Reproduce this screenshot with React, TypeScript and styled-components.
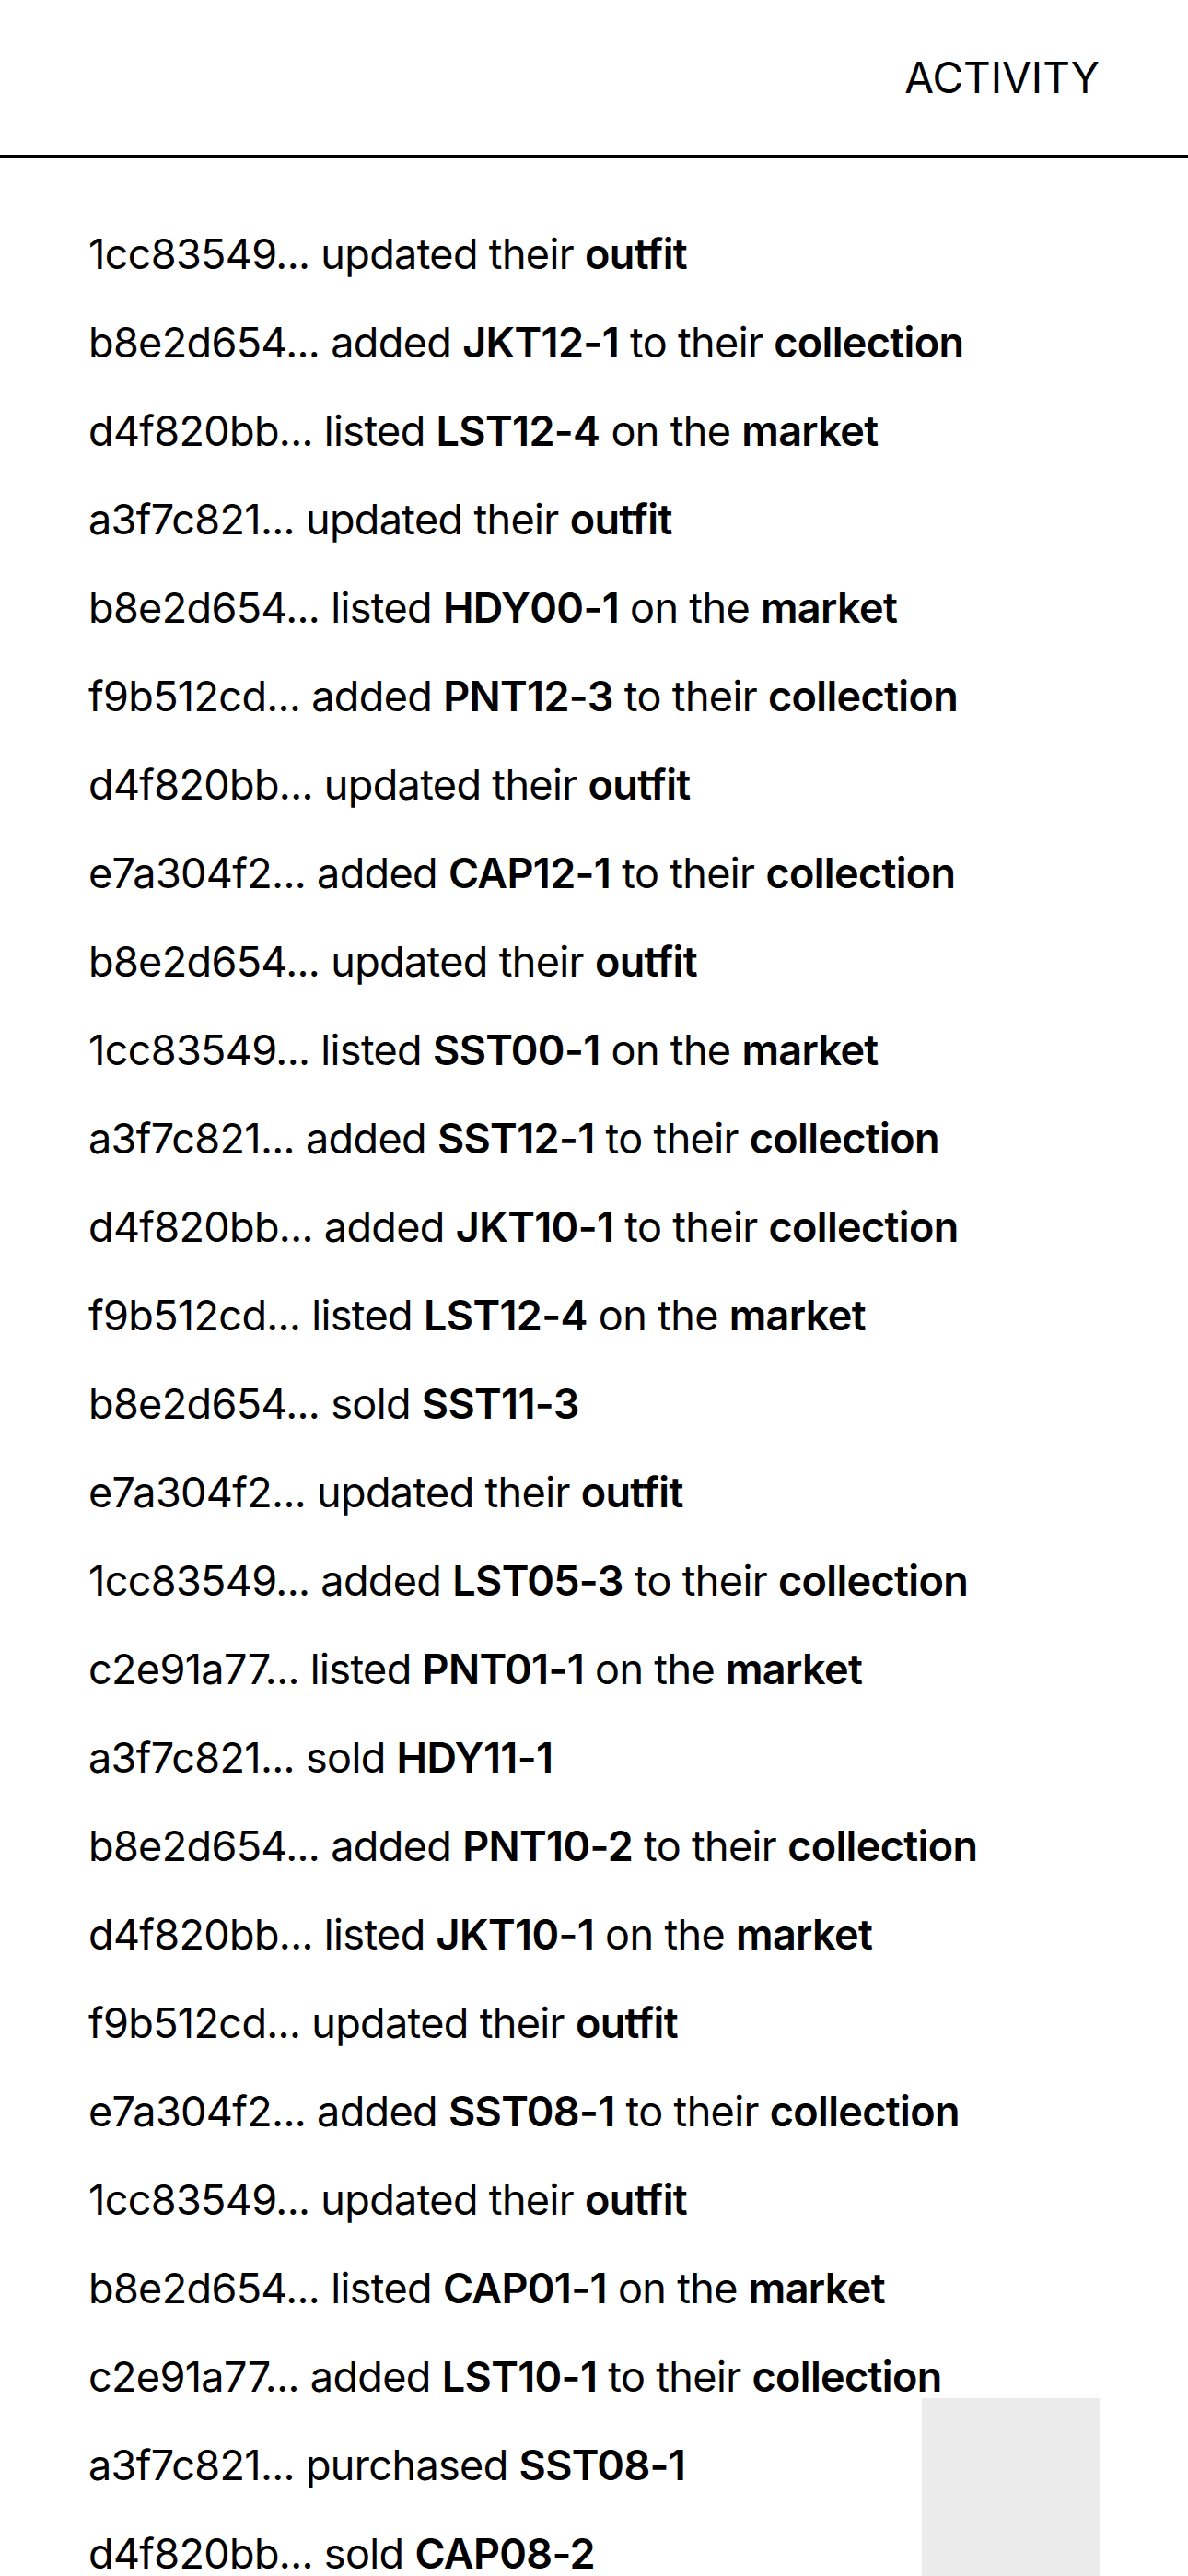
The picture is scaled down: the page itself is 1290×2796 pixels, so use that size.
import React from "react";
import styled, { createGlobalStyle } from "styled-components";

const GlobalStyle = createGlobalStyle`
  html, body {
    margin: 0;
    padding: 0;
    background: #ffffff;
    overflow: hidden;
  }
  body {
    font-family: Inter, "Noto Sans", sans-serif;
    color: #000;
  }
`;

const Page = styled.div`
  height: 100vh;
  overflow: hidden;
  display: flex;
  flex-direction: column;
`;

const Header = styled.header`
  height: 168px;
  flex: 0 0 auto;
  display: flex;
  align-items: center;
  justify-content: flex-end;
  padding: 0 96px;
  border-bottom: 3px solid #000;
`;

const Title = styled.h1`
  margin: 0;
  font-size: 46px;
  font-weight: 400;
  letter-spacing: 0;
  line-height: 1;
`;

const Feed = styled.ul`
  list-style: none;
  margin: 0;
  padding: 57px 96px 0;
  display: flex;
  flex-direction: column;
`;

const Row = styled.li`
  font-size: 45px;
  line-height: 96px;
  letter-spacing: -0.65px;
  white-space: nowrap;
  font-weight: 400;
`;

const Strong = styled.b`
  font-weight: 600;
`;

const Corner = styled.div`
  position: fixed;
  right: 96px;
  bottom: 0;
  width: 193px;
  height: 193px;
  background: #ebebeb;
`;

type Kind = "outfit" | "added" | "listed" | "sold" | "purchased";
type Entry = { user: string; kind: Kind; item?: string };

const entries: Entry[] = [
  { user: "1cc83549", kind: "outfit" },
  { user: "b8e2d654", kind: "added", item: "JKT12-1" },
  { user: "d4f820bb", kind: "listed", item: "LST12-4" },
  { user: "a3f7c821", kind: "outfit" },
  { user: "b8e2d654", kind: "listed", item: "HDY00-1" },
  { user: "f9b512cd", kind: "added", item: "PNT12-3" },
  { user: "d4f820bb", kind: "outfit" },
  { user: "e7a304f2", kind: "added", item: "CAP12-1" },
  { user: "b8e2d654", kind: "outfit" },
  { user: "1cc83549", kind: "listed", item: "SST00-1" },
  { user: "a3f7c821", kind: "added", item: "SST12-1" },
  { user: "d4f820bb", kind: "added", item: "JKT10-1" },
  { user: "f9b512cd", kind: "listed", item: "LST12-4" },
  { user: "b8e2d654", kind: "sold", item: "SST11-3" },
  { user: "e7a304f2", kind: "outfit" },
  { user: "1cc83549", kind: "added", item: "LST05-3" },
  { user: "c2e91a77", kind: "listed", item: "PNT01-1" },
  { user: "a3f7c821", kind: "sold", item: "HDY11-1" },
  { user: "b8e2d654", kind: "added", item: "PNT10-2" },
  { user: "d4f820bb", kind: "listed", item: "JKT10-1" },
  { user: "f9b512cd", kind: "outfit" },
  { user: "e7a304f2", kind: "added", item: "SST08-1" },
  { user: "1cc83549", kind: "outfit" },
  { user: "b8e2d654", kind: "listed", item: "CAP01-1" },
  { user: "c2e91a77", kind: "added", item: "LST10-1" },
  { user: "a3f7c821", kind: "purchased", item: "SST08-1" },
  { user: "d4f820bb", kind: "sold", item: "CAP08-2" },
];

function Sentence({ e }: { e: Entry }) {
  const who = `${e.user}... `;
  switch (e.kind) {
    case "outfit":
      return (
        <>
          {who}updated their <Strong>outfit</Strong>
        </>
      );
    case "added":
      return (
        <>
          {who}added <Strong>{e.item}</Strong> to their <Strong>collection</Strong>
        </>
      );
    case "listed":
      return (
        <>
          {who}listed <Strong>{e.item}</Strong> on the <Strong>market</Strong>
        </>
      );
    case "sold":
      return (
        <>
          {who}sold <Strong>{e.item}</Strong>
        </>
      );
    case "purchased":
      return (
        <>
          {who}purchased <Strong>{e.item}</Strong>
        </>
      );
  }
}

export default function App() {
  return (
    <Page>
      <GlobalStyle />
      <Header>
        <Title>ACTIVITY</Title>
      </Header>
      <Feed>
        {entries.map((e, i) => (
          <Row key={i}>
            <Sentence e={e} />
          </Row>
        ))}
      </Feed>
      <Corner />
    </Page>
  );
}
